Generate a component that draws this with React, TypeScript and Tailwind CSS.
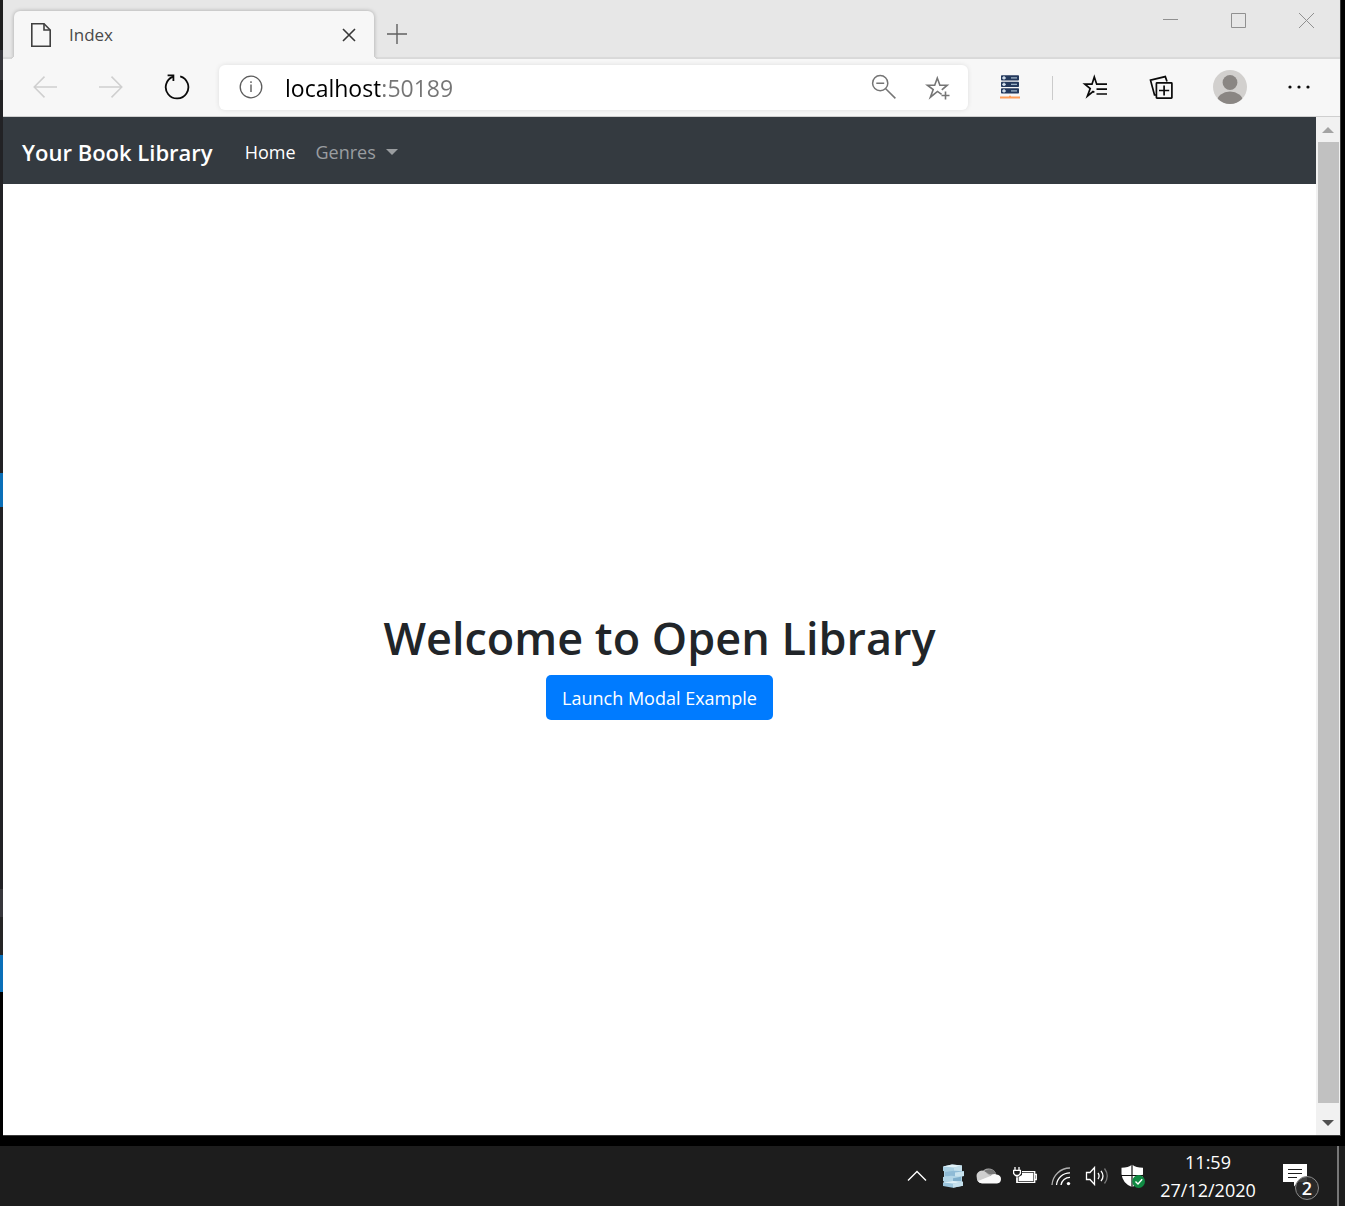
import React from "react";

function IconButton({ label, wide, children }: { label: string; wide?: boolean; children: React.ReactNode }) {
  return (
    <button
      type="button"
      aria-label={label}
      className={
        wide
          ? "flex h-12 w-[66px] shrink-0 items-center justify-center pb-0.5"
          : "flex h-12 w-[60px] shrink-0 items-center justify-center pb-0.5"
      }
    >
      {children}
    </button>
  );
}

function BehindStrip() {
  return (
    <div aria-hidden="true" className="flex w-[3px] shrink-0 flex-col bg-black">
      <div className="h-[50px] bg-[#1e1e1e]" />
      <div className="h-[30px] bg-[#36363b]" />
      <div className="h-[393px] bg-[#222225]" />
      <div className="h-[34px] bg-[#0a6fb8]" />
      <div className="h-[382px] bg-[#222225]" />
      <div className="h-[28px] bg-[#37373c]" />
      <div className="h-[38px] bg-[#252526]" />
      <div className="h-[37px] bg-[#0a6fb8]" />
    </div>
  );
}

function TabStrip() {
  return (
    <div className="flex h-[59px] shrink-0 items-stretch bg-[#e7e7e7] shadow-[inset_0_-2px_1px_#d9d9d9]">
      <div className="relative ml-[11px] mt-[11px] flex w-[360px] items-center rounded-t-md bg-[#f7f7f7] pl-[17px] pr-[15px] shadow-[0_0_4px_rgba(0,0,0,0.28)] [clip-path:inset(-6px_-6px_0_-6px)] before:absolute before:bottom-0 before:-left-1 before:size-1 before:bg-[radial-gradient(circle_at_0_0,transparent_4px,#f7f7f7_4px)] after:absolute after:bottom-0 after:-right-1 after:size-1 after:bg-[radial-gradient(circle_at_100%_0,transparent_4px,#f7f7f7_4px)]">
        <svg width="20" height="24" viewBox="0 0 20 24" fill="none" stroke="#404040" strokeWidth="1.6" aria-hidden="true">
          <path d="M.8.8H13L19.2 7V23.2H.8Z" />
          <path d="M13 .8V7H19.2" />
        </svg>
        <span className="ml-[18px] flex-1 text-[17px] leading-6 text-[#4a4a4a]">Index</span>
        <button type="button" aria-label="Close tab" className="flex size-5 items-center justify-center">
          <svg width="14" height="14" viewBox="0 0 14 14" stroke="#383838" strokeWidth="1.6" aria-hidden="true">
            <path d="M1 1L13 13M13 1L1 13" />
          </svg>
        </button>
      </div>
      <button type="button" aria-label="New tab" className="mt-2 flex w-[46px] items-center justify-center">
        <svg width="20" height="20" viewBox="0 0 20 20" stroke="#606060" strokeWidth="1.4" aria-hidden="true">
          <path d="M10 0V20M0 10H20" />
        </svg>
      </button>
      <div className="ml-auto flex h-10 text-[#909090]">
        <button type="button" aria-label="Minimize" className="flex w-[68px] items-center justify-center">
          <svg width="15" height="15" viewBox="0 0 15 15" stroke="currentColor" fill="none" aria-hidden="true">
            <path d="M0 6.5H15" />
          </svg>
        </button>
        <button type="button" aria-label="Maximize" className="flex w-[68px] items-center justify-center">
          <svg width="15" height="15" viewBox="0 0 15 15" stroke="currentColor" fill="none" aria-hidden="true">
            <path d="M.5.5H14.5V14.5H.5Z" />
          </svg>
        </button>
        <button type="button" aria-label="Close window" className="flex w-[68px] items-center justify-center">
          <svg width="15" height="15" viewBox="0 0 15 15" stroke="currentColor" fill="none" aria-hidden="true">
            <path d="M0 0L15 15M15 0L0 15" />
          </svg>
        </button>
      </div>
    </div>
  );
}

const SERVER_ROWS = [0, 6.5, 13];

function Toolbar() {
  return (
    <div className="flex h-[58px] shrink-0 items-center gap-1.5 border-b border-[#cfcfcf] bg-[#f7f7f7] pl-3 pr-[11px]">
      <IconButton label="Back">
        <svg width="24" height="22" viewBox="0 0 24 22" fill="none" stroke="#cfcfcf" strokeWidth="1.5" aria-hidden="true">
          <path d="M24 11H1.2M11.5 .6L1.2 11L11.5 21.4" />
        </svg>
      </IconButton>
      <IconButton label="Forward">
        <svg width="24" height="22" viewBox="0 0 24 22" fill="none" stroke="#cfcfcf" strokeWidth="1.5" aria-hidden="true">
          <path d="M0 11H22.8M12.5 .6L22.8 11L12.5 21.4" />
        </svg>
      </IconButton>
      <IconButton label="Refresh">
        <svg width="26" height="26" viewBox="0 0 26 26" fill="none" stroke="#0a0a0a" strokeWidth="1.8" aria-hidden="true">
          <path d="M16.2 2.3A11.3 11.3 0 1 1 9 2.6" />
          <path d="M3.6 1.3H9.4V7" />
        </svg>
      </IconButton>
      <div className="ml-1.5 mr-1.5 flex h-[45px] min-w-0 flex-1 items-center rounded-md bg-white pl-5 pr-[17px] shadow-[0_0_5px_rgba(0,0,0,0.1)]">
        <button type="button" aria-label="View site information" className="flex h-8 w-6 shrink-0 items-center justify-center pb-0.5">
          <svg width="24" height="24" viewBox="0 0 24 24" fill="none" stroke="#5c5c5c" strokeWidth="1.3" aria-hidden="true">
            <circle cx="12" cy="12" r="10.8" />
            <path d="M12 9.5V17M12 6.3V8" strokeWidth="1.4" />
          </svg>
        </button>
        <input
          type="text"
          aria-label="Address"
          defaultValue="localhost:50189"
          className="ml-[22px] min-w-0 flex-1 bg-[linear-gradient(90deg,#000_95px,#757575_95px)] bg-clip-text text-[23px] leading-8 text-transparent outline-none"
        />
        <button type="button" aria-label="Zoom" className="flex h-8 w-[30px] shrink-0 items-center justify-center pb-0.5">
          <svg width="26" height="26" viewBox="0 0 26 26" fill="none" stroke="#757575" strokeWidth="1.5" aria-hidden="true">
            <circle cx="9.2" cy="9.2" r="7.6" />
            <path d="M5.3 9.2H13.2M14.7 14.7L24.4 24.4" />
          </svg>
        </button>
        <button type="button" aria-label="Add this page to favorites" className="ml-[26px] flex h-8 w-[26px] shrink-0 items-center justify-center">
          <svg width="26" height="26" viewBox="0 0 26 26" fill="none" stroke="#757575" strokeWidth="1.6" aria-hidden="true">
            <path d="M16.6 19.3L12.5 16.4L5.4 22.2L8.2 14.6L2.4 10.2H9.7L12.3 3L14.9 10.2H22.2L16.8 14.8" />
            <path d="M20.5 16.5V24.5M16.5 20.5H24.5" />
          </svg>
        </button>
      </div>
      <IconButton label="Extension">
        <svg width="22" height="24" viewBox="0 0 22 24" aria-hidden="true">
          {SERVER_ROWS.map((y) => (
            <g key={y}>
              <rect x="2" y={y + 0.3} width="18" height="5.2" rx=".8" fill="#24395c" />
              <path d={`M3.2 ${y + 2.9}h3.6M5 ${y + 1.2}v3.4`} stroke="#d9e6f2" strokeWidth="1.5" />
              <path d={`M12 ${y + 2.9}H18`} stroke="#9db3c6" strokeWidth="1.3" />
            </g>
          ))}
          <path d="M1 22.5H21M11 20.8V23" stroke="#ff9c57" strokeWidth="2" />
        </svg>
      </IconButton>
      <div className="mx-1.5 h-6 w-px shrink-0 bg-[#cbcbcb]" />
      <IconButton label="Favorites">
        <svg width="26" height="26" viewBox="0 0 26 26" fill="none" stroke="#0a0a0a" strokeWidth="1.7" aria-hidden="true">
          <path d="M12.4 18.2L11 17.6L5.4 22.2L8.2 14.6L2.8 10.2H10L12.3 3L14.7 10.2H25M14.5 15.1H25M14.5 20H25" />
        </svg>
      </IconButton>
      <IconButton label="Collections">
        <svg width="24" height="24" viewBox="0 0 24 24" fill="none" stroke="#0a0a0a" strokeWidth="1.7" aria-hidden="true">
          <path d="M18 6.5L16.3 1.6L1.5 5.1L5.5 20H7" />
          <rect x="7.4" y="7.8" width="15.5" height="15.3" rx=".6" />
          <path d="M15.1 10.4V20.6M10 15.5H20.2" />
        </svg>
      </IconButton>
      <IconButton label="Profile" wide>
        <svg width="34" height="34" viewBox="0 0 34 34" aria-hidden="true">
          <clipPath id="profile-clip">
            <circle cx="17" cy="17" r="17" />
          </clipPath>
          <g clipPath="url(#profile-clip)">
            <rect width="34" height="34" fill="#d2d0ce" />
            <circle cx="17" cy="12.5" r="7.4" fill="#8a8683" />
            <ellipse cx="17" cy="31.5" rx="13" ry="10" fill="#8a8683" />
          </g>
        </svg>
      </IconButton>
      <IconButton label="Settings and more">
        <svg width="22" height="4" viewBox="0 0 22 4" fill="#0a0a0a" aria-hidden="true">
          <circle cx="2" cy="2" r="1.6" />
          <circle cx="11" cy="2" r="1.6" />
          <circle cx="20" cy="2" r="1.6" />
        </svg>
      </IconButton>
    </div>
  );
}

function Navbar() {
  return (
    <nav className="flex h-[67px] shrink-0 items-center bg-[#343a40] px-[19px] pt-0.5">
      <a href="#" className="text-[22px] leading-9 font-semibold text-white">
        Your Book Library
      </a>
      <a href="#" className="ml-8 text-lg text-white">
        Home
      </a>
      <button type="button" className="ml-5 flex items-center text-lg text-[#9a9da0]">
        Genres
        <span className="ml-2.5 border-x-[6px] border-t-[6px] border-x-transparent border-t-current" />
      </button>
    </nav>
  );
}

function ScrollBar() {
  return (
    <div aria-hidden="true" className="flex w-6 shrink-0 flex-col items-center bg-[#f1f1f1]">
      <div className="flex h-[25px] items-center">
        <svg width="12" height="6" viewBox="0 0 12 6" fill="#a3a3a3">
          <path d="M0 6L6 0L12 6Z" />
        </svg>
      </div>
      <div className="w-[21px] flex-1 bg-[#c1c1c1]" />
      <div className="flex h-8 items-center pt-2">
        <svg width="12" height="6" viewBox="0 0 12 6" fill="#505050">
          <path d="M0 0L6 6L12 0Z" />
        </svg>
      </div>
    </div>
  );
}

function TrayButton({ label, children }: { label: string; children: React.ReactNode }) {
  return (
    <button type="button" aria-label={label} className="flex h-full w-9 items-center justify-center">
      {children}
    </button>
  );
}

function Taskbar() {
  return (
    <footer className="flex h-[60px] shrink-0 items-center justify-end bg-[#1d1d1d] text-white">
      <TrayButton label="Show hidden icons">
        <svg width="20" height="12" viewBox="0 0 20 12" fill="none" stroke="#fff" strokeWidth="1.4" aria-hidden="true">
          <path d="M1 10.5L10 1.5L19 10.5" />
        </svg>
      </TrayButton>
      <TrayButton label="Database server">
        <svg width="22" height="24" viewBox="0 0 22 24" aria-hidden="true">
          <path d="M2 2H20V22H2Z" fill="#a9cfe2" />
          <path d="M1 2.5L10 .5L20 1.5V7L12 8.5L1 7Z" fill="#a9cfe2" />
          <path d="M1 2.5L10 .5L20 1.5L12 3.4Z" fill="#e3f2f8" />
          <path d="M12 3.4L20 1.5V7L12 8.5Z" fill="#c3dfec" />
          <path d="M3 8L12 6.8L22 7.3V12L13 13.5L3 12Z" fill="#8fbbd6" />
          <path d="M13 8.6L22 7.3V12L13 13.5Z" fill="#c8e3ef" />
          <path d="M1 13L9 11.8L19 12.7V17L11 18.5L1 17.2Z" fill="#b2d5e7" />
          <path d="M11 14.2L19 12.7V17L11 18.5Z" fill="#7faecb" />
          <path d="M1 18.5L11 17L21 17.7V21.8L11 23.7L1 22Z" fill="#9bc5dd" />
          <path d="M1 18.5L11 17L21 17.7L11 19.4Z" fill="#e0f0f7" />
          <path d="M11 19.4L21 17.7V21.8L11 23.7Z" fill="#c5e0ed" />
        </svg>
      </TrayButton>
      <TrayButton label="OneDrive">
        <svg width="26" height="16" viewBox="0 0 26 16" aria-hidden="true">
          <path d="M6 15A5 5 0 0 1 5.5 5A8 8 0 0 1 19.5 4.5L20 7L11 14Z" fill="#a8a8a8" />
          <path d="M7 4.2Q10 3.4 13 6L20.4 6.2L19.5 4.5A8 8 0 0 0 7 4.2Z" fill="#777" />
          <path d="M1 10A5.3 5.3 0 0 1 11 5.8L16.5 9L5 15A5 5 0 0 1 1 10Z" fill="#cfcfcf" />
          <path d="M2 13L14.5 8Q17 5.3 20.5 6.4Q25 7 25 11Q25 15 21 15.5H6Q3.5 15.3 2 13Z" fill="#fafafa" />
        </svg>
      </TrayButton>
      <TrayButton label="Battery">
        <svg width="24" height="18" viewBox="0 0 24 18" fill="none" stroke="#fff" strokeWidth="1.3" aria-hidden="true">
          <path d="M9 4.6H21.7V15.4H4V11" />
          <path d="M21.7 7.5H23.3V12.5H21.7" />
          <path d="M9 6H20.4V14H5.6V10L9 8Z" fill="#fff" stroke="none" />
          <path d="M2 0V3M6 0V3M.6 3.3H7.4V6.5L5.5 8.5H2.5L.6 6.5ZM4 8.5V16" />
        </svg>
      </TrayButton>
      <TrayButton label="Network">
        <svg width="20" height="20" viewBox="0 0 20 20" fill="none" stroke="#fff" strokeWidth="1.3" aria-hidden="true">
          <path d="M1 19A18 18 0 0 1 19 2" stroke="#b0b0b0" />
          <path d="M5.5 19A13.5 13.5 0 0 1 19 6.8M10 19A9 9 0 0 1 19 11.3" />
          <circle cx="17.5" cy="17.6" r="1.7" fill="#fff" stroke="none" />
        </svg>
      </TrayButton>
      <TrayButton label="Volume">
        <svg width="24" height="20" viewBox="0 0 24 20" fill="none" stroke="#fff" strokeWidth="1.3" aria-hidden="true">
          <path d="M1.5 6.5H5L9.5 1.5V18.5L5 13.5H1.5Z" />
          <path d="M13 7Q15.2 10 13 13M16 4.8Q20 10 16 15.2" />
          <path d="M19.5 2.5Q25 10 19.5 17.5" stroke="#777" />
        </svg>
      </TrayButton>
      <TrayButton label="Windows Security">
        <svg width="24" height="24" viewBox="0 0 24 24" aria-hidden="true">
          <path d="M11 .5Q15 3.8 22 3.8V10Q21 19.5 11 23Q1.5 19.5 .5 10V3.8Q7.5 3.8 11 .5Z" fill="#fff" />
          <path d="M11 0V23M0 11.5H22" stroke="#111" strokeWidth="1.2" />
          <circle cx="17.6" cy="17.5" r="6.4" fill="#108a43" />
          <path d="M14.5 17.5L17 20L21.2 15.3" stroke="#fff" strokeWidth="1.4" fill="none" />
        </svg>
      </TrayButton>
      <button type="button" className="flex h-full w-[114px] flex-col items-center justify-center text-lg">
        <span>11:59</span>
        <span>27/12/2020</span>
      </button>
      <button type="button" aria-label="Notifications" className="flex h-full w-[72px] items-center justify-center pt-3">
        <span className="relative block h-9 w-9">
          <svg width="24" height="26" viewBox="0 0 24 26" aria-hidden="true">
            <path d="M0 0H24V18H15L11 22.5V18H0Z" fill="#fff" />
            <path d="M5 5.5H19M5 9.5H19M5 13.5H14" stroke="#1d1d1d" strokeWidth="1.2" />
          </svg>
          <span className="absolute bottom-0 right-0 flex size-6 items-center justify-center rounded-full border border-[#8a8a8a] bg-[#2b2b2b]/90 text-lg font-semibold">
            2
          </span>
        </span>
      </button>
      <div className="mr-1.5 h-full w-0.5 bg-[#777]" />
    </footer>
  );
}

export default function App() {
  return (
    <div className="flex h-screen flex-col bg-black font-['Open_Sans','Noto_Sans',sans-serif]">
      <div className="flex min-h-0 flex-1">
        <BehindStrip />
        <div className="mb-[10px] mr-1 flex min-w-0 flex-1 flex-col border-b border-r border-[#3a3a3a] bg-white">
          <TabStrip />
          <Toolbar />
          <div className="flex min-h-0 flex-1">
            <div className="flex min-w-0 flex-1 flex-col">
              <Navbar />
              <main className="flex flex-1 flex-col items-center justify-center pt-2.5">
                <h1 className="mb-2 text-center text-[45px] leading-[58px] font-semibold text-[#212529]">
                  Welcome to Open Library
                </h1>
                <button type="button" className="h-[45px] rounded-[5px] bg-[#007bff] px-4 text-lg text-white">
                  Launch Modal Example
                </button>
              </main>
            </div>
            <ScrollBar />
          </div>
        </div>
      </div>
      <Taskbar />
    </div>
  );
}
